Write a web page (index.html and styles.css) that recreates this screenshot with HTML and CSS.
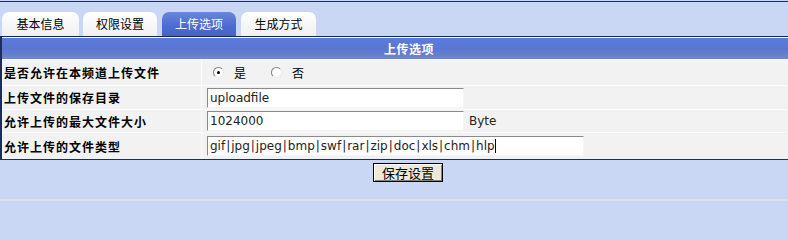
FILE: index.html
```html
<!DOCTYPE html>
<html lang="zh-CN">
<head>
<meta charset="utf-8">
<title>上传选项</title>
<link rel="stylesheet" href="styles.css">
</head>
<body>
<div class="page">
  <div class="tabbar">
    <div class="tab t1">基本信息</div>
    <div class="tab t2">权限设置</div>
    <div class="tab t3 active">上传选项</div>
    <div class="tab t4">生成方式</div>
  </div>
  <div class="panel">
    <div class="panel-head">上传选项</div>
    <div class="row r1">
      <div class="label">是否允许在本频道上传文件</div>
      <div class="value">
        <label class="radio-item"><span class="radio checked"></span>是</label>
        <label class="radio-item"><span class="radio"></span>否</label>
      </div>
    </div>
    <div class="row r2">
      <div class="label">上传文件的保存目录</div>
      <div class="value"><span class="input w256">uploadfile</span></div>
    </div>
    <div class="row r3">
      <div class="label">允许上传的最大文件大小</div>
      <div class="value"><span class="input w256">1024000</span><span class="unit">Byte</span></div>
    </div>
    <div class="row r4">
      <div class="label">允许上传的文件类型</div>
      <div class="value"><span class="input w376">gif<span class="pipe">|</span>jpg<span class="pipe">|</span>jpeg<span class="pipe">|</span>bmp<span class="pipe">|</span>swf<span class="pipe">|</span>rar<span class="pipe">|</span>zip<span class="pipe">|</span>doc<span class="pipe">|</span>xls<span class="pipe">|</span>chm<span class="pipe">|</span>hlp<span class="caret"></span></span></div>
    </div>
  </div>
  <div class="actions">
    <button class="btn" type="button">保存设置</button>
  </div>
</div>
</body>
</html>
```

FILE: styles.css
```css
html, body {
  margin: 0;
  padding: 0;
  overflow: hidden;
  background: #c9d7f5;
  font-family: "Noto Sans CJK SC", "DejaVu Sans", sans-serif;
  font-size: 12px;
  color: #000;
}

.page {
  width: 816px;
  margin-top: 1px;
  border-top: 1px solid #1c2c5c;
  background: #c9d7f5;
}

.tabbar {
  height: 34px;
  display: flex;
  align-items: flex-end;
  padding-left: 2px;
  gap: 4px;
}

.tab {
  height: 24px;
  display: flex;
  align-items: center;
  justify-content: center;
  border-radius: 7px 7px 0 0;
  background: linear-gradient(#ffffff, #f0f0f0);
  color: #000;
  font-size: 12px;
  line-height: 1;
}
.t1 { width: 77px; }
.t2 { width: 74px; }
.t3 { width: 74px; margin-left: 1px; }
.t4 { width: 75px; margin-left: 1px; }

.tab.active {
  background: linear-gradient(#6a86dc, #4b6bcf 60%, #4564c6);
  color: #fff;
}

.panel {
  border-top: 1px solid #15265a;
  border-left: 2px solid #1c2c5c;
  border-bottom: 1px solid #1c2c5c;
  background: #ffffff;
  padding-top: 1px;
}

.panel-head {
  height: 21px;
  display: flex;
  align-items: center;
  justify-content: center;
  background: linear-gradient(#5b7bdc, #5a76d2 50%, #6f86c8);
  color: #fff;
  font-weight: bold;
  letter-spacing: 0.5px;
}

.row {
  display: grid;
  grid-template-columns: 199px 1fr;
  column-gap: 1px;
  background: #fbfbfb;
  border-top: 1px solid #fbfbfb;
}
.r1 { height: 25px; }
.r2 { height: 23px; }
.r3 { height: 22px; }
.r4 { height: 26px; }

.label, .value {
  background: #f2f2f2;
  display: flex;
  align-items: center;
}

.label {
  padding-left: 2px;
  font-weight: bold;
  letter-spacing: 1px;
}

.value {
  padding-left: 5px;
}

.radio-item {
  display: flex;
  align-items: center;
  margin-left: 6px;
  margin-right: 25px;
}
.radio-item + .radio-item { margin-left: 0; }

.radio {
  width: 9px;
  height: 9px;
  border-radius: 50%;
  border: 1px solid;
  border-color: #808080 #e8e8e8 #e8e8e8 #808080;
  background: #fff;
  margin-right: 10px;
  position: relative;
}
.radio.checked::after {
  content: "";
  position: absolute;
  left: 3px;
  top: 3px;
  width: 3px;
  height: 3px;
  border-radius: 50%;
  background: #000;
}

.input {
  box-sizing: border-box;
  height: 20px;
  display: flex;
  align-items: center;
  padding-left: 2px;
  background: #fff;
  border-top: 1px solid #8a8a8a;
  border-left: 1px solid #8a8a8a;
  border-right: 1px solid #f6f6f6;
  border-bottom: 1px solid #f6f6f6;
  font-family: "DejaVu Sans", Verdana, sans-serif;
  font-size: 12px;
  color: #222;
  white-space: pre;
}
.w256 { width: 257px; }
.w376 { width: 377px; }

.pipe {
  padding: 0 1px;
}

.caret {
  display: inline-block;
  width: 1px;
  height: 14px;
  background: #000;
}

.unit {
  margin-left: 5px;
  font-family: "DejaVu Sans", Verdana, sans-serif;
  font-size: 12px;
  color: #222;
}

.actions {
  height: 41px;
  display: flex;
  justify-content: center;
  align-items: flex-start;
  padding-top: 3px;
  box-sizing: border-box;
  border-bottom: 2px solid #dcdfe6;
}

.btn {
  width: 70px;
  height: 19px;
  padding: 0;
  background: #ece9d8;
  border: 1px solid #000;
  box-shadow: inset 1px 1px #ffffff, inset -1px -1px #808080;
  font-family: "Noto Sans CJK SC", sans-serif;
  font-size: 13px;
  line-height: 1;
  color: #000;
}
```
